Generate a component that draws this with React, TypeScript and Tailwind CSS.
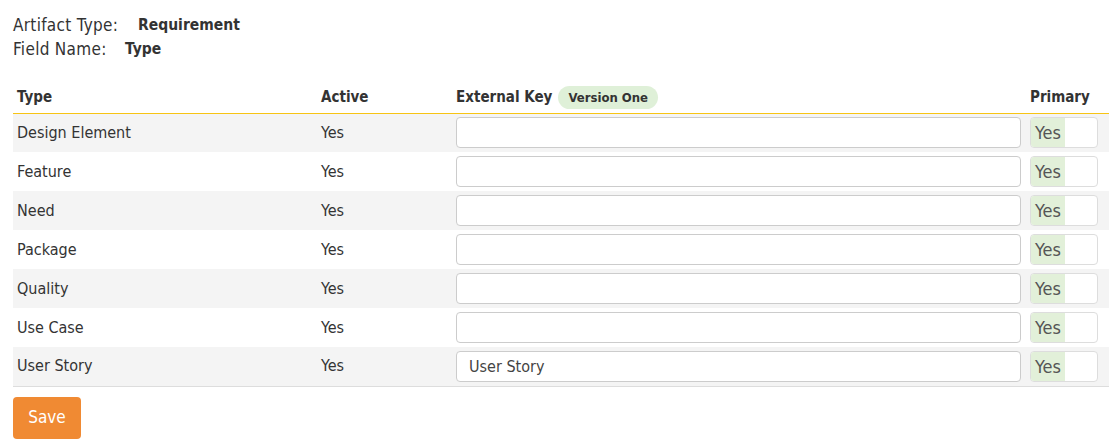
import React from "react";

const rows = [
  { type: "Design Element", active: "Yes", key: "" },
  { type: "Feature", active: "Yes", key: "" },
  { type: "Need", active: "Yes", key: "" },
  { type: "Package", active: "Yes", key: "" },
  { type: "Quality", active: "Yes", key: "" },
  { type: "Use Case", active: "Yes", key: "" },
  { type: "User Story", active: "Yes", key: "User Story" },
];

export default function App() {
  return (
    <div className="w-[1109px] h-[445px] bg-white text-[#333] font-['DejaVu_Sans_Condensed','DejaVu_Sans',sans-serif] text-[16px] overflow-hidden">
      <div className="pl-[13px] pt-[14px] text-[17px]">
        <div className="flex items-center h-[24px]">
          <span className="w-[125px] tracking-[0.3px]">Artifact Type:</span>
          <span className="font-bold text-[15.5px]">Requirement</span>
        </div>
        <div className="flex items-center h-[24px]">
          <span className="w-[112px] tracking-[0.3px]">Field Name:</span>
          <span className="font-bold text-[15.5px]">Type</span>
        </div>
      </div>

      <table className="ml-[13px] mt-[20px] w-[1096px] border-collapse table-fixed">
        <thead>
          <tr className="border-b border-[#f7c414] h-[31px] text-left text-[15px]">
            <th className="pl-[4px] w-[308px] font-bold">Type</th>
            <th className="w-[135px] font-bold">Active</th>
            <th className="font-bold">
              <div className="flex items-center gap-[6px]">
                External Key
                <span className="bg-[#dff0d8] rounded-full px-[10px] h-[23px] flex items-center text-[13px]">
                  Version One
                </span>
              </div>
            </th>
            <th className="w-[79px] font-bold">Primary</th>
          </tr>
        </thead>
        <tbody>
          {rows.map((r, i) => (
            <tr
              key={r.type}
              className={`h-[39px] ${i % 2 === 0 ? "bg-[#f4f4f4]" : "bg-white"} ${
                i === rows.length - 1 ? "border-b border-[#ddd]" : ""
              }`}
            >
              <td className="pl-[4px]">{r.type}</td>
              <td>{r.active}</td>
              <td className="pr-[9px]">
                <input
                  readOnly
                  value={r.key}
                  className="block w-full h-[31px] border border-[#ccc] rounded-[4px] bg-white px-[12px] text-[16px] text-[#444] outline-none"
                />
              </td>
              <td className="pr-[11px]">
                <div className="flex h-[31px] border border-[#ddd] rounded-[4px] bg-white overflow-hidden">
                  <span className="bg-[#e2f0d9] w-[34px] flex items-center justify-center text-[18px] text-[#555]">
                    Yes
                  </span>
                </div>
              </td>
            </tr>
          ))}
        </tbody>
      </table>

      <button className="block ml-[13px] mt-[10px] w-[68px] h-[42px] rounded-[4px] bg-[#f08a33] text-white text-[17px]">
        Save
      </button>
    </div>
  );
}
